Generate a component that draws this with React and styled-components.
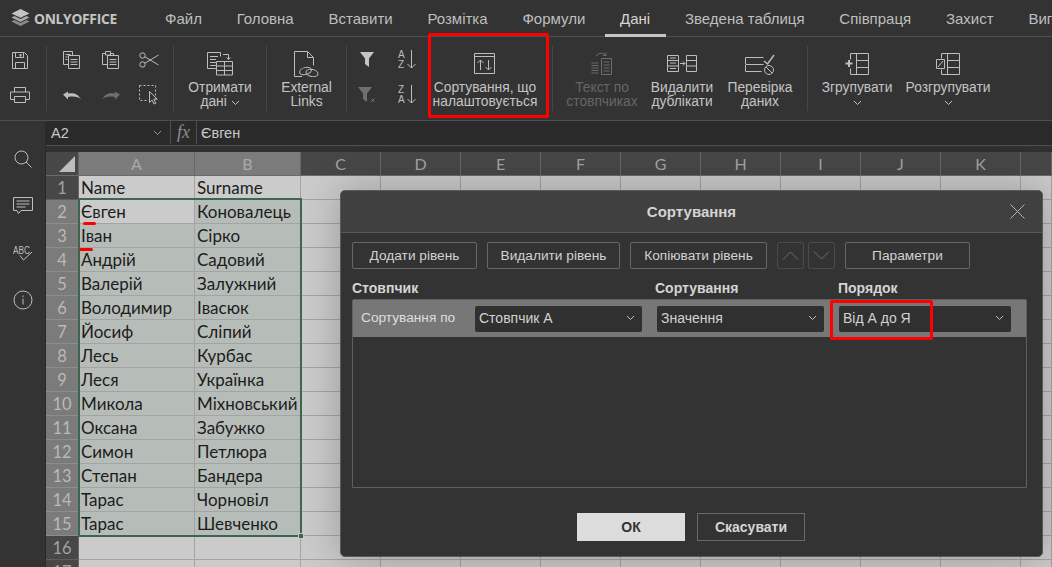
import React from "react";
import styled, { createGlobalStyle } from "styled-components";

const GlobalStyle = createGlobalStyle`
  html, body { margin: 0; padding: 0; height: 100%; background: #333; overflow: hidden; }
  body { font-family: "Liberation Sans", Arial, sans-serif; }
  #root { height: 100%; }
`;

const App_ = styled.div`
  position: relative;
  width: 1052px;
  height: 567px;
  overflow: hidden;
  background: #333;
  color: #cfcfcf;
`;

/* header */
const Header = styled.div`
  display: flex;
  align-items: center;
  height: 37px;
  box-sizing: border-box;
  border-bottom: 1px solid #4f4f4f;
  background: #333;
`;
const Logo = styled.div`
  display: flex;
  align-items: center;
  gap: 4px;
  width: 165px;
  padding-left: 11px;
  box-sizing: border-box;
  flex-shrink: 0;
  font-family: "Open Sans", sans-serif;
  font-weight: 700;
  font-size: 13.8px;
  letter-spacing: -0.3px;
  color: #c4c4c4;
`;
const Tabs = styled.div`
  display: flex;
  gap: 34.8px;
  height: 100%;
  white-space: nowrap;
`;
const Tab = styled.div`
  position: relative;
  display: flex;
  align-items: center;
  font-size: 15px;
  color: #bfbfbf;
  ${p => p.$active && `
    color: #d6d6d6;
    &::after {
      content: "";
      position: absolute;
      left: -15px;
      right: -16px;
      bottom: -1px;
      height: 3px;
      background: #c6c6c6;
    }
  `}
`;

/* toolbar */
const Toolbar = styled.div`
  display: flex;
  height: 84px;
  box-sizing: border-box;
  padding-top: 9px;
  border-bottom: 1px solid #4f4f4f;
  background: #333;
`;
const Group = styled.div`
  display: flex;
  width: ${p => p.$w}px;
  height: 65px;
  box-sizing: border-box;
  flex-shrink: 0;
  border-right: 1px solid ${p => (p.$plain ? "transparent" : "#464646")};
`;
const SmallGrid = styled.div`
  display: grid;
  grid-template-columns: repeat(${p => p.$cols}, ${p => p.$cell}px);
  grid-auto-rows: 28px;
  row-gap: 7px;
  padding-left: ${p => p.$left}px;
`;
const SmallBtn = styled.div`
  display: flex;
  align-items: center;
  justify-content: center;
`;
const BigBtn = styled.div`
  display: flex;
  flex-direction: column;
  align-items: center;
  width: ${p => p.$w}px;
  flex-shrink: 0;
  font-size: 13.8px;
  line-height: 14px;
  text-align: center;
  color: ${p => (p.$off ? "#666" : "#c4c4c4")};
  white-space: nowrap;
`;
const BigIcon = styled.div`
  display: flex;
  justify-content: center;
  align-items: flex-start;
  height: 35px;
  box-sizing: border-box;
  padding-top: ${p => p.$top ?? 6}px;
`;

/* formula bar */
const Formula = styled.div`
  display: flex;
  height: 25px;
  box-sizing: border-box;
  padding-bottom: 1px;
  border-bottom: 1px solid #4f4f4f;
  background: #2a2a2a;
  font-size: 14.5px;
  color: #c8c8c8;
`;
const NameBox = styled.div`
  display: flex;
  align-items: center;
  justify-content: space-between;
  width: 125px;
  box-sizing: border-box;
  padding: 0 8px 0 5px;
  border-right: 1px solid #4f4f4f;
`;
const Fx = styled.div`
  display: flex;
  align-items: center;
  justify-content: center;
  width: 26px;
  box-sizing: border-box;
  border-right: 1px solid #4f4f4f;
  font-family: "Liberation Serif", serif;
  font-style: italic;
  font-size: 18px;
  color: #8f8f8f;
`;
const FormulaText = styled.div`
  display: flex;
  align-items: center;
  padding-left: 4px;
`;
const SheetGap = styled.div`
  height: 6px;
  background: #303030;
`;

/* body */
const Body = styled.div`
  display: flex;
  height: 446px;
`;
const Sidebar = styled.div`
  width: 46px;
  flex-shrink: 0;
  box-sizing: border-box;
  padding-top: 14px;
  display: flex;
  flex-direction: column;
  align-items: center;
  background: #333;
  border-right: 1px solid #2a2a2a;
`;
const SideSlot = styled.div`
  display: flex;
  align-items: center;
  justify-content: center;
  height: 47px;
`;
const Main = styled.div`
  position: relative;
  flex: 1;
  overflow: hidden;
  background: #cbcbcb;
`;
const SheetGrid = styled.div`
  display: grid;
  grid-template-columns: 33px 116px 106px repeat(9, 80px) 1fr;
  grid-auto-rows: 24px;
`;
const ColHead = styled.div`
  display: flex;
  align-items: center;
  justify-content: center;
  box-sizing: border-box;
  border-right: 1px solid #666;
  border-bottom: 1px solid #6a6a6a;
  background: ${p => (p.$on ? "#7b7b7b" : "#474747")};
  color: ${p => (p.$on ? "#aaa" : "#a2a2a2")};
  font-family: Lato, sans-serif;
  font-size: 16px;
`;
const Corner = styled(ColHead)`
  position: relative;
  &::after {
    content: "";
    position: absolute;
    right: 3px;
    bottom: 3px;
    border-style: solid;
    border-width: 0 0 16px 16px;
    border-color: transparent transparent #bdbdbd transparent;
  }
`;
const RowHead = styled.div`
  display: flex;
  align-items: center;
  justify-content: center;
  box-sizing: border-box;
  border-right: 1px solid #666;
  border-bottom: 1px solid ${p => (p.$on ? "#8c8c8c" : "#5e5e5e")};
  background: ${p => (p.$on ? "#7b7b7b" : "#474747")};
  color: ${p => (p.$on ? "#b9b9b9" : "#a2a2a2")};
  font-family: Lato, sans-serif;
  font-size: 16.5px;
`;
const Cell = styled.div`
  box-sizing: border-box;
  padding-left: 2px;
  line-height: 24px;
  border-right: 1px solid #a4a4a4;
  border-bottom: 1px solid #a4a4a4;
  background: ${p => (p.$sel ? "#b6bdb9" : "#cbcbcb")};
  color: #1c1c1c;
  font-family: Lato, "Noto Sans", sans-serif;
  font-size: 17px;
  white-space: nowrap;
  overflow: hidden;
`;
const Selection = styled.div`
  position: absolute;
  left: 32px;
  top: 77px;
  width: 224px;
  height: 339px;
  box-sizing: border-box;
  border: 2px solid #3d6650;
  pointer-events: none;
  &::after {
    content: "";
    position: absolute;
    right: -4px;
    bottom: -4px;
    width: 4px;
    height: 4px;
    background: #3d6650;
    border: 1px solid #cbcbcb;
  }
`;
const Scribble = styled.div`
  position: absolute;
  left: ${p => p.$x}px;
  top: ${p => p.$y}px;
  width: ${p => p.$w}px;
  height: 3px;
  border-radius: 2px;
  background: #f00;
`;

/* dialog */
const Dialog = styled.div`
  position: absolute;
  left: 340px;
  top: 190px;
  width: 703px;
  height: 367px;
  box-sizing: border-box;
  display: flex;
  flex-direction: column;
  border: 1px solid #5a5a5a;
  border-radius: 5px;
  background: #333;
  box-shadow: 0 0 40px rgba(0, 0, 0, 0.25);
  overflow: hidden;
`;
const DialogHead = styled.div`
  position: relative;
  display: flex;
  align-items: center;
  justify-content: center;
  height: 41px;
  flex-shrink: 0;
  border-bottom: 1px solid #575757;
  background: #404040;
  font-size: 15px;
  font-weight: 700;
  color: #d4d4d4;
`;
const CloseBtn = styled.div`
  position: absolute;
  right: 17px;
  top: 13px;
  display: flex;
`;
const DialogBody = styled.div`
  display: flex;
  flex-direction: column;
  flex: 1;
  padding: 9px 15px 15px 11px;
`;
const BtnRow = styled.div`
  display: flex;
  gap: ${p => p.$gap ?? 10}px;
`;
const LevelBtn = styled.div`
  display: flex;
  align-items: center;
  justify-content: center;
  width: ${p => p.$w}px;
  height: 27px;
  box-sizing: border-box;
  border: 1px solid #676767;
  border-radius: 2px;
  font-size: 13.7px;
  color: #d2d2d2;
  white-space: nowrap;
`;
const ArrowBtn = styled.div`
  display: flex;
  align-items: center;
  justify-content: center;
  width: 27px;
  height: 27px;
  box-sizing: border-box;
  border: 1px solid #4a4a4a;
  border-radius: 2px;
`;
const Columns = styled.div`
  display: grid;
  grid-template-columns: 303px 183px 1fr;
  height: 30px;
  align-items: end;
  padding-bottom: 3px;
  box-sizing: border-box;
  font-size: 14px;
  font-weight: 700;
  color: #d4d4d4;
`;
const ListBox = styled.div`
  height: 189px;
  box-sizing: border-box;
  border: 1px solid #5f5f5f;
  border-radius: 2px 2px 0 0;
`;
const ListRow = styled.div`
  display: flex;
  align-items: center;
  height: 37px;
  padding: 0 15px 0 8px;
  background: #777;
`;
const RowLabel = styled.div`
  width: 114px;
  flex-shrink: 0;
  margin-top: -2px;
  font-size: 13.7px;
  color: #dedede;
`;
const Select = styled.div`
  display: flex;
  align-items: center;
  justify-content: space-between;
  width: ${p => p.$w}px;
  height: 26px;
  margin-right: ${p => p.$mr ?? 0}px;
  box-sizing: border-box;
  padding: 0 7px 1px 4px;
  border-radius: 2px;
  background: #303030;
  font-size: 14px;
  color: #d2d2d2;
`;
const Footer = styled.div`
  display: flex;
  justify-content: center;
  gap: 12px;
  margin-top: 25px;
  padding-left: 3px;
`;
const DlgButton = styled.div`
  display: flex;
  align-items: center;
  justify-content: center;
  width: 108px;
  height: 28px;
  box-sizing: border-box;
  border: 1px solid ${p => (p.$primary ? "#ddd" : "#6a6a6a")};
  background: ${p => (p.$primary ? "#ddd" : "transparent")};
  color: ${p => (p.$primary ? "#333" : "#d4d4d4")};
  font-size: 14px;
  font-weight: 700;
`;
const Highlight = styled.div`
  position: absolute;
  left: ${p => p.$x}px;
  top: ${p => p.$y}px;
  width: ${p => p.$w}px;
  height: ${p => p.$h}px;
  box-sizing: border-box;
  border: 3px solid #f00;
  border-radius: 2px;
  pointer-events: none;
`;

const C = "#bdbdbd";
const Ico = ({ w, h, children, color = C, sw = 1 }) => (
  <svg width={w} height={h} viewBox={`0 0 ${w} ${h}`} fill="none" stroke={color} strokeWidth={sw}>
    {children}
  </svg>
);
const Chevron = ({ color = "#c0c0c0" }) => (
  <Ico w={9} h={6} color={color}>
    <path d="M1 1l3.5 3.5L8 1" />
  </Ico>
);

const LogoIcon = () => (
  <svg width="19" height="18" viewBox="0 0 19 18">
    <path d="M9.5 0L18.5 4.4 9.5 8.8 .5 4.4z" fill="#c4c4c4" />
    <path d="M3.4 7l6.1 3 6.1-3 2.9 1.5-9 4.4-9-4.4z" fill="#a8a8a8" />
    <path d="M3.4 11l6.1 3 6.1-3 2.9 1.5-9 4.5-9-4.5z" fill="#8c8c8c" />
  </svg>
);
const SaveIcon = () => (
  <Ico w={16} h={17}>
    <path d="M.5.5h12l3 3v13H.5z" />
    <path d="M3.5.5v5h8v-5M3.5 16.5v-6h9v6" />
    <path d="M8.5 2v2.5" strokeWidth="2" />
  </Ico>
);
const PrintIcon = () => (
  <Ico w={20} h={16}>
    <path d="M4.5 5V.5h11V5M4.5 12.5H.5v-7.5h19v7.5h-4" />
    <path d="M4.5 9.5h11v6h-11z" />
  </Ico>
);
const CopyIcon = () => (
  <Ico w={18} h={18}>
    <path d="M5.5 13.5H.5V.5h9v4" />
    <path d="M5.5 4.5h11v13h-11zM7.5 8.5h7M7.5 11h7M7.5 13.5h7" />
    <path d="M2.5 3.5h5M2.5 6h2M2.5 8.5h2" />
  </Ico>
);
const PasteIcon = () => (
  <Ico w={18} h={18}>
    <path d="M5.5 13.5H.5V2.5h3M8.5 2.5h3v2" />
    <path d="M3.5 .5h5v3.5h-5z" />
    <path d="M5.5 4.5h11v13h-11zM7.5 8.5h7M7.5 11h7M7.5 13.5h7" />
  </Ico>
);
const ScissorsIcon = () => (
  <Ico w={20} h={16}>
    <circle cx="3.5" cy="3.5" r="2.7" />
    <circle cx="3.5" cy="12.5" r="2.7" />
    <path d="M6 4.8L19.5 13M6 11.2L19.5 3" />
  </Ico>
);
const UndoIcon = ({ flip, color }) => (
  <svg width="18" height="9" viewBox="0 0 18 9" style={flip ? { transform: "scaleX(-1)" } : undefined}>
    <path d="M0 3.5l5-3v2c6-1 10 .5 13 6-3-3-7-3.5-13-2.5v2.500z" fill={color} />
  </svg>
);
const SelectIcon = () => (
  <Ico w={20} h={20}>
    <path d="M.5.5h16v13" strokeDasharray="2 2" />
    <path d="M.5.5v15h9" strokeDasharray="2 2" />
    <path d="M10.5 6.500v11l2.500-2.500 2 4 1.800-.8-2-4h3.500z" />
  </Ico>
);
const DataIcon = () => (
  <Ico w={26} h={24}>
    <path d="M9.5 16.500H.5V.5h13v4" />
    <path d="M3 4.500h8M3 7.500h6M3 10.500h6M3 13.500h6" />
    <path d="M9.500 9.500h16v13.500h-16zM9.500 14h16M9.500 18.500h16M17.500 9.500v13.500" />
    <path d="M16 2.500h5.500v4.500M19.500 5.500l2 2 2-2" />
  </Ico>
);
const ExtLinksIcon = () => (
  <Ico w={25} h={27}>
    <path d="M8 25.500H.5V.5h13l6 6v8" />
    <path d="M13.500.5v6h6" />
    <ellipse cx="11.500" cy="20" rx="6" ry="3.500" transform="rotate(-15 11.500 20)" />
    <ellipse cx="18" cy="22" rx="6" ry="3.500" transform="rotate(10 18 22)" />
  </Ico>
);
const FilterIcon = ({ color = "#c4c4c4", clear }) => (
  <svg width={clear ? 18 : 14} height="16" viewBox={clear ? "0 0 18 16" : "0 0 14 16"}>
    <path d="M0 0h14L9 6.500V15L5 12V6.500z" fill={color} />
    {clear && <path d="M13 11.500l3.500 3.500M16.500 11.500L13 15" stroke={color} fill="none" />}
  </svg>
);
const SortText = styled.text`
  font-family: "Liberation Sans", sans-serif;
  font-size: 10px;
  fill: #bdbdbd;
  stroke: none;
`;
const SortIcon = ({ top, bottom }) => (
  <Ico w={18} h={20}>
    <SortText x="0" y="8">{top}</SortText>
    <SortText x="0" y="18">{bottom}</SortText>
    <path d="M13.500 0v18M9.500 14l4 4 4-4" />
  </Ico>
);
const CustomSortIcon = () => (
  <Ico w={22} h={22}>
    <path d="M.5.5h20v20H.5zM.5 3.500h20" />
    <path d="M6.500 17V7M3.500 10l3-3 3 3M14.500 7v10M11.500 14l3 3 3-3" />
  </Ico>
);
const TextColsIcon = ({ color = "#6d6d6d" }) => (
  <Ico w={22} h={23} color={color}>
    <path d="M.5 11h7M.5 13.500h7M.5 16h7M.5 18.500h7M.5 21h7" />
    <path d="M10.500 6.500h10v16h-10zM12.500 10h6M12.500 13h6M12.500 16h6M12.500 19h6" />
    <path d="M5 4C8 .5 13 .5 15 3.500M15 .5v3h-3" />
  </Ico>
);
const DedupIcon = () => (
  <Ico w={30} h={18}>
    <path d="M.5.5h11v16H.5zM.5 5.500h11M.5 11h11" />
    <path d="M19.500.5h10v16h-10zM19.500 5.500h10M19.500 11h10" />
    <path d="M3 3h6M3 8h6M3 13.500h6" />
    <path d="M13 8.500h5M16 6.500l2 2-2 2" />
  </Ico>
);
const ValidIcon = () => (
  <Ico w={30} h={21}>
    <path d="M.5 3.500h18M.5 10.500h18M.5 17.500h16M.5 3.500v6.500M.5 11v6.500" />
    <path d="M19 7l3.500 3L29 1" strokeWidth="1.500" />
    <circle cx="24" cy="16" r="4.500" />
    <path d="M21 13l6 6" />
  </Ico>
);
const GroupIcon = () => (
  <Ico w={25} h={22}>
    <path d="M11.500.5h12v21h-12zM11.500 7.500h12M11.500 14.500h12" />
    <path d="M15 .5H5.500v6M15 21.500H5.500v-6" />
    <path d="M.5 10.500h7M4 7v7" strokeWidth="2" />
  </Ico>
);
const UngroupIcon = () => (
  <Ico w={24} h={22}>
    <path d="M11.500.5h12v21h-12zM11.500 7.500h12M11.500 14.500h12" />
    <path d="M12 .5H5.500v5M12 21.500H5.500v-5" />
    <path d="M.5 6.500h8v9h-8zM2 14l5-6" />
  </Ico>
);
const SearchIcon = () => (
  <Ico w={18} h={18}>
    <circle cx="7.500" cy="7.500" r="6.500" />
    <path d="M12 12l5.500 5.500" />
  </Ico>
);
const CommentIcon = () => (
  <Ico w={20} h={18}>
    <path d="M.5.5h19v13H8l-2.500 3-1.500-3H.5z" />
    <path d="M3.500 4h13M3.500 7h13M3.500 10h9" />
  </Ico>
);
const SpellIcon = () => (
  <svg width="20" height="16" viewBox="0 0 20 16">
    <SortText x="0" y="9" textLength="17" lengthAdjust="spacingAndGlyphs">ABC</SortText>
    <path d="M7 10.500l3.500 4.500L19 7" stroke={C} fill="none" />
  </svg>
);
const InfoIcon = () => (
  <Ico w={20} h={20}>
    <circle cx="10" cy="10" r="9" />
    <path d="M10 8.500v6M10 5.500v1.500" />
  </Ico>
);
const CloseIcon = () => (
  <Ico w={15} h={15} color="#b4b4b4">
    <path d="M.5.5l14 14M14.500.5l-14 14" />
  </Ico>
);

const tabs = ["Файл", "Головна", "Вставити", "Розмітка", "Формули", "Дані", "Зведена таблиця", "Співпраця", "Захист", "Вигляд"];
const cols = ["A", "B", "C", "D", "E", "F", "G", "H", "I", "J", "K"];
const names = [
  ["Name", "Surname"],
  ["Євген", "Коновалець"],
  ["Іван", "Сірко"],
  ["Андрій", "Садовий"],
  ["Валерій", "Залужний"],
  ["Володимир", "Івасюк"],
  ["Йосиф", "Сліпий"],
  ["Лесь", "Курбас"],
  ["Леся", "Українка"],
  ["Микола", "Міхновський"],
  ["Оксана", "Забужко"],
  ["Симон", "Петлюра"],
  ["Степан", "Бандера"],
  ["Тарас", "Чорновіл"],
  ["Тарас", "Шевченко"],
  ["", ""],
  ["", ""]
];

function Sheet() {
  return (
    <SheetGrid>
      <Corner />
      {cols.map(c => (
        <ColHead key={c} $on={c === "A" || c === "B"}>{c}</ColHead>
      ))}
      <ColHead />
      {names.map((row, i) => {
        const num = i + 1;
        const on = num >= 2 && num <= 15;
        return (
          <React.Fragment key={num}>
            <RowHead $on={on}>{num}</RowHead>
            <Cell $sel={on && num !== 2}>{row[0]}</Cell>
            <Cell $sel={on}>{row[1]}</Cell>
            {cols.slice(2).map(c => (
              <Cell key={c} />
            ))}
            <Cell />
          </React.Fragment>
        );
      })}
    </SheetGrid>
  );
}

export default function App() {
  return (
    <App_>
      <GlobalStyle />
      <Header>
        <Logo>
          <LogoIcon />
          ONLYOFFICE
        </Logo>
        <Tabs>
          {tabs.map(t => (
            <Tab key={t} $active={t === "Дані"}>{t}</Tab>
          ))}
        </Tabs>
      </Header>

      <Toolbar>
        <Group $w={47}>
          <SmallGrid $cols={1} $cell={40} $left={0}>
            <SmallBtn><SaveIcon /></SmallBtn>
            <SmallBtn><PrintIcon /></SmallBtn>
          </SmallGrid>
        </Group>
        <Group $w={127}>
          <SmallGrid $cols={3} $cell={38.5} $left={6}>
            <SmallBtn><CopyIcon /></SmallBtn>
            <SmallBtn><PasteIcon /></SmallBtn>
            <SmallBtn><ScissorsIcon /></SmallBtn>
            <SmallBtn><UndoIcon color="#bdbdbd" /></SmallBtn>
            <SmallBtn><UndoIcon flip color="#6f6f6f" /></SmallBtn>
            <SmallBtn><SelectIcon /></SmallBtn>
          </SmallGrid>
        </Group>
        <Group $w={93}>
          <BigBtn $w={92}>
            <BigIcon><DataIcon /></BigIcon>
            Отримати
            <span>дані <Chevron /></span>
          </BigBtn>
        </Group>
        <Group $w={80}>
          <BigBtn $w={79}>
            <BigIcon $top={5}><ExtLinksIcon /></BigIcon>
            External
            <span>Links</span>
          </BigBtn>
        </Group>
        <Group $w={206}>
          <SmallGrid $cols={2} $cell={40} $left={0}>
            <SmallBtn><FilterIcon /></SmallBtn>
            <SmallBtn><SortIcon top="A" bottom="Z" /></SmallBtn>
            <SmallBtn><FilterIcon clear color="#6f6f6f" /></SmallBtn>
            <SmallBtn><SortIcon top="Z" bottom="A" /></SmallBtn>
          </SmallGrid>
          <BigBtn $w={116}>
            <BigIcon $top={7}><CustomSortIcon /></BigIcon>
            Сортування, що
            <span>налаштовується</span>
          </BigBtn>
        </Group>
        <Group $w={255}>
          <BigBtn $w={98} $off>
            <BigIcon><TextColsIcon /></BigIcon>
            Текст по
            <span>стовпчиках</span>
          </BigBtn>
          <BigBtn $w={62}>
            <BigIcon $top={9}><DedupIcon /></BigIcon>
            Видалити
            <span>дублікати</span>
          </BigBtn>
          <BigBtn $w={94}>
            <BigIcon $top={8}><ValidIcon /></BigIcon>
            Перевірка
            <span>даних</span>
          </BigBtn>
        </Group>
        <Group $w={245} $plain>
          <BigBtn $w={98}>
            <BigIcon $top={7}><GroupIcon /></BigIcon>
            Згрупувати
            <span><Chevron /></span>
          </BigBtn>
          <BigBtn $w={84}>
            <BigIcon $top={7}><UngroupIcon /></BigIcon>
            Розгрупувати
            <span><Chevron /></span>
          </BigBtn>
        </Group>
      </Toolbar>

      <Body>
        <Sidebar>
          <SideSlot><SearchIcon /></SideSlot>
          <SideSlot><CommentIcon /></SideSlot>
          <SideSlot><SpellIcon /></SideSlot>
          <SideSlot><InfoIcon /></SideSlot>
        </Sidebar>
        <Main>
          <Formula>
            <NameBox>A2<Chevron color="#9a9a9a" /></NameBox>
            <Fx>fx</Fx>
            <FormulaText>Євген</FormulaText>
          </Formula>
          <SheetGap />
          <Sheet />
          <Selection />
          <Scribble $x={37} $y={101} $w={13} />
          <Scribble $x={33} $y={127} $w={14} />
        </Main>
      </Body>

      <Dialog>
        <DialogHead>
          Сортування
          <CloseBtn><CloseIcon /></CloseBtn>
        </DialogHead>
        <DialogBody>
          <BtnRow>
            <LevelBtn $w={125}>Додати рівень</LevelBtn>
            <LevelBtn $w={133}>Видалити рівень</LevelBtn>
            <LevelBtn $w={137}>Копіювати рівень</LevelBtn>
            <BtnRow $gap={4}>
              <ArrowBtn><Ico w={17} h={9} color="#6e6e6e"><path d="M1 8.500l7.500-7.500L16 8.500" /></Ico></ArrowBtn>
              <ArrowBtn><Ico w={17} h={9} color="#6e6e6e"><path d="M1 .5l7.500 7.500L16 .5" /></Ico></ArrowBtn>
            </BtnRow>
            <LevelBtn $w={125}>Параметри</LevelBtn>
          </BtnRow>
          <Columns>
            <span>Стовпчик</span>
            <span>Сортування</span>
            <span>Порядок</span>
          </Columns>
          <ListBox>
            <ListRow>
              <RowLabel>Сортування по</RowLabel>
              <Select $w={167} $mr={15}>Стовпчик А<Chevron /></Select>
              <Select $w={167} $mr={15}>Значення<Chevron /></Select>
              <Select $w={172}>Від А до Я<Chevron /></Select>
            </ListRow>
          </ListBox>
          <Footer>
            <DlgButton $primary>ОК</DlgButton>
            <DlgButton>Скасувати</DlgButton>
          </Footer>
        </DialogBody>
      </Dialog>

      <Highlight $x={428} $y={33} $w={121} $h={85} />
      <Highlight $x={830} $y={300} $w={103} $h={40} />
    </App_>
  );
}
